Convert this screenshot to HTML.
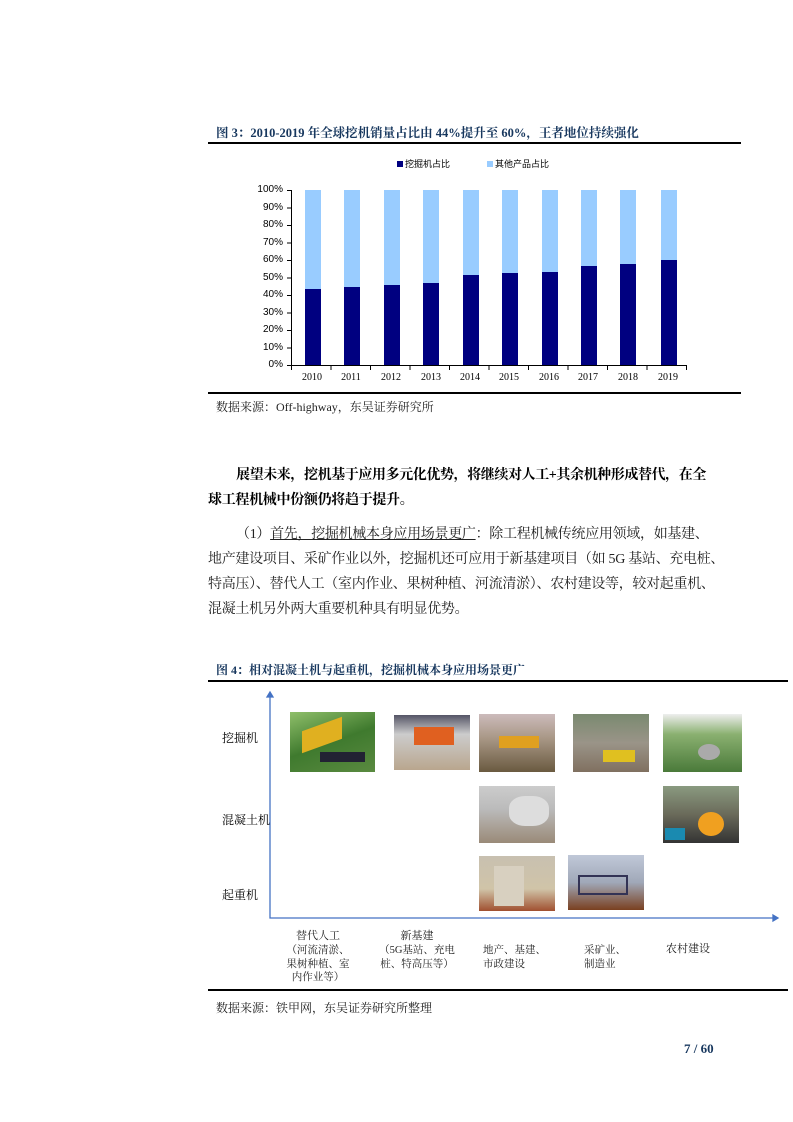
<!DOCTYPE html>
<html><head><meta charset="utf-8"><style>
*{margin:0;padding:0;box-sizing:border-box}
body{width:793px;height:1122px;background:#fff;position:relative;font-family:"Liberation Serif","Noto Serif CJK SC","Noto Sans CJK SC",serif;color:#000;overflow:hidden}
.a{position:absolute;white-space:nowrap}
.t{font-weight:bold;color:#17375e;font-size:12px}
.hl{position:absolute;height:2px;background:#000}
.src{font-size:12px;color:#222}
.yl{font-family:"Liberation Sans",sans-serif;font-size:10px;width:40px;text-align:right;left:243px}
.xl{font-size:10px;width:40px;text-align:center;top:372px}
.bar{position:absolute;width:16px;top:190px;height:175px;background:#99ccff}
.bar i{position:absolute;left:0;bottom:0;width:16px;background:#000080;display:block}
.p{font-size:14px;line-height:25px;letter-spacing:-0.3px}
.img{position:absolute}
.lab{font-size:12px}
.cl{font-size:10.5px;line-height:13.5px;text-align:center;color:#222}
</style></head><body>
<div class="a t" style="left:216px;top:123px;font-size:12.5px">图 3：2010-2019 年全球挖机销量占比由 44%提升至 60%，王者地位持续强化</div>
<div class="hl" style="left:208px;top:142px;width:533px"></div>
<div class="a" style="left:397px;top:161px;width:6px;height:6px;background:#000080"></div>
<div class="a" style="left:405px;top:157px;font-size:9px;font-family:'Noto Sans CJK SC',sans-serif">挖掘机占比</div>
<div class="a" style="left:487px;top:161px;width:6px;height:6px;background:#99ccff"></div>
<div class="a" style="left:495px;top:157px;font-size:9px;font-family:'Noto Sans CJK SC',sans-serif">其他产品占比</div>
<div class="a yl" style="top:184px">100%</div><div class="a yl" style="top:202px">90%</div><div class="a yl" style="top:219px">80%</div><div class="a yl" style="top:237px">70%</div><div class="a yl" style="top:254px">60%</div><div class="a yl" style="top:272px">50%</div><div class="a yl" style="top:289px">40%</div><div class="a yl" style="top:307px">30%</div><div class="a yl" style="top:324px">20%</div><div class="a yl" style="top:342px">10%</div><div class="a yl" style="top:359px">0%</div>
<div class="a" style="left:291px;top:190px;width:1px;height:176px;background:#000"></div>
<div class="a" style="left:291px;top:365px;width:395px;height:1px;background:#000"></div>
<svg class="a" style="left:286px;top:189px" width="410" height="184"><g stroke="#000" stroke-width="1">
<path d="M1 1.5h5M1 19h5M1 36.5h5M1 54h5M1 71.5h5M1 89h5M1 106.5h5M1 124h5M1 141.5h5M1 159h5M1 176.5h5"/>
<path d="M5.5 176v5M45 176v5M84.5 176v5M124 176v5M163.5 176v5M203 176v5M242.5 176v5M282 176v5M321.5 176v5M361 176v5M400.5 176v5"/></g></svg>
<div class="bar" style="left:305px"><i style="height:43.5%"></i></div>
<div class="bar" style="left:344px"><i style="height:44.5%"></i></div>
<div class="bar" style="left:384px"><i style="height:45.5%"></i></div>
<div class="bar" style="left:423px"><i style="height:47%"></i></div>
<div class="bar" style="left:463px"><i style="height:51.5%"></i></div>
<div class="bar" style="left:502px"><i style="height:52.5%"></i></div>
<div class="bar" style="left:542px"><i style="height:53%"></i></div>
<div class="bar" style="left:581px"><i style="height:56.5%"></i></div>
<div class="bar" style="left:620px"><i style="height:58%"></i></div>
<div class="bar" style="left:661px"><i style="height:60%"></i></div>
<div class="a xl" style="left:292px">2010</div><div class="a xl" style="left:331px">2011</div><div class="a xl" style="left:371px">2012</div><div class="a xl" style="left:411px">2013</div><div class="a xl" style="left:450px">2014</div><div class="a xl" style="left:489px">2015</div><div class="a xl" style="left:529px">2016</div><div class="a xl" style="left:568px">2017</div><div class="a xl" style="left:608px">2018</div><div class="a xl" style="left:648px">2019</div>
<div class="hl" style="left:208px;top:392px;width:533px"></div>
<div class="a src" style="left:216px;top:398px">数据来源：Off-highway，东吴证券研究所</div>

<div class="a p" style="left:236px;top:463px;font-weight:bold;letter-spacing:-0.4px">展望未来，挖机基于应用多元化优势，将继续对人工+其余机种形成替代，在全</div>
<div class="a p" style="left:208px;top:488px;font-weight:bold">球工程机械中份额仍将趋于提升。</div>
<div class="a p" style="left:236px;top:522px;color:#222">（1）<span style="text-decoration:underline">首先，挖掘机械本身应用场景更广</span>：除工程机械传统应用领域，如基建、</div>
<div class="a p" style="left:208px;top:547px;color:#222">地产建设项目、采矿作业以外，挖掘机还可应用于新基建项目（如 5G 基站、充电桩、</div>
<div class="a p" style="left:208px;top:572px;color:#222">特高压）、替代人工（室内作业、果树种植、河流清淤）、农村建设等，较对起重机、</div>
<div class="a p" style="left:208px;top:597px;color:#222">混凝土机另外两大重要机种具有明显优势。</div>

<div class="a t" style="left:216px;top:661px">图 4：相对混凝土机与起重机，挖掘机械本身应用场景更广</div>
<div class="hl" style="left:208px;top:680px;width:580px"></div>
<svg class="a" style="left:260px;top:690px" width="525" height="235"><g stroke="#4472c4" stroke-width="1.3" fill="#4472c4"><path d="M10 5V228H515" fill="none"/><path d="M7 7l3-5 3 5z"/><path d="M513 225l5 3-5 3z"/></g></svg>
<div class="a lab" style="left:222px;top:729px">挖掘机</div>
<div class="a lab" style="left:222px;top:811px">混凝土机</div>
<div class="a lab" style="left:222px;top:886px">起重机</div>

<div class="img" style="left:290px;top:712px;width:85px;height:60px;background:linear-gradient(160deg,#8fbf6a,#3f7a2e 50%,#5a8a40);"><div style="position:absolute;left:12px;top:12px;width:40px;height:22px;background:#e0b020;transform:skewY(-20deg)"></div><div style="position:absolute;left:30px;top:40px;width:45px;height:10px;background:#223"></div></div>
<div class="img" style="left:394px;top:715px;width:76px;height:55px;background:linear-gradient(180deg,#556 0%,#ccc 35%,#b9a68e 100%)"><div style="position:absolute;left:20px;top:12px;width:40px;height:18px;background:#e06020"></div></div>
<div class="img" style="left:479px;top:714px;width:76px;height:58px;background:linear-gradient(180deg,#cbb 0%,#a98 40%,#6a5a40 100%)"><div style="position:absolute;left:20px;top:22px;width:40px;height:12px;background:#e0a020"></div></div>
<div class="img" style="left:573px;top:714px;width:76px;height:58px;background:linear-gradient(180deg,#7a8a70 0%,#9a9488 50%,#807060 100%)"><div style="position:absolute;left:30px;top:36px;width:32px;height:12px;background:#e0c020"></div></div>
<div class="img" style="left:663px;top:714px;width:79px;height:58px;background:linear-gradient(180deg,#eee 0%,#8ab070 35%,#4a7a3a 100%)"><div style="position:absolute;left:35px;top:30px;width:22px;height:16px;background:#aaa;border-radius:50%"></div></div>
<div class="img" style="left:479px;top:786px;width:76px;height:57px;background:linear-gradient(180deg,#ccc 0%,#bbb 40%,#9a8a78 100%)"><div style="position:absolute;left:30px;top:10px;width:40px;height:30px;background:#ddd;border-radius:40%"></div></div>
<div class="img" style="left:663px;top:786px;width:76px;height:57px;background:linear-gradient(180deg,#8a9a80 0%,#6a6a5a 50%,#333 100%)"><div style="position:absolute;left:35px;top:26px;width:26px;height:24px;background:#f0a020;border-radius:50%"></div><div style="position:absolute;left:2px;top:42px;width:20px;height:12px;background:#1a8ab0"></div></div>
<div class="img" style="left:479px;top:856px;width:76px;height:55px;background:linear-gradient(180deg,#c8c0b0 0%,#d0c4a8 60%,#a05030 100%)"><div style="position:absolute;left:15px;top:10px;width:30px;height:40px;background:#d8d0c0"></div></div>
<div class="img" style="left:568px;top:855px;width:76px;height:55px;background:linear-gradient(180deg,#c0c8d8 0%,#a0a8b8 50%,#7a4020 100%)"><div style="position:absolute;left:10px;top:20px;width:50px;height:20px;border:2px solid #335"></div></div>

<div class="a cl" style="left:278px;top:930px;width:80px;font-size:11px">替代人工</div>
<div class="a cl" style="left:278px;top:944px;width:80px">（河流清淤、<br>果树种植、室<br>内作业等）</div>
<div class="a cl" style="left:372px;top:930px;width:90px;font-size:11px">新基建</div>
<div class="a cl" style="left:372px;top:944px;width:90px">（5G基站、充电<br>桩、特高压等）</div>
<div class="a cl" style="left:483px;top:944px;text-align:left">地产、基建、<br>市政建设</div>
<div class="a cl" style="left:584px;top:944px;text-align:left">采矿业、<br>制造业</div>
<div class="a cl" style="left:666px;top:943px;text-align:left;font-size:11px">农村建设</div>
<div class="hl" style="left:208px;top:989px;width:580px"></div>
<div class="a src" style="left:216px;top:999px">数据来源：铁甲网，东吴证券研究所整理</div>
<div class="a" style="left:684px;top:1041px;font-size:13px;font-weight:bold;color:#17375e">7 / 60</div>
</body></html>
